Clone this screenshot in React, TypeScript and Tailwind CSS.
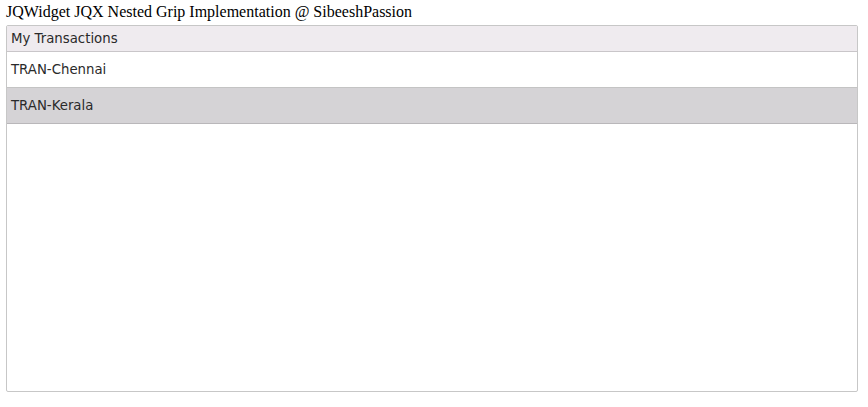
export default function App() {
  const rows = [
    { name: "TRAN-Chennai", selected: false },
    { name: "TRAN-Kerala", selected: true },
  ];

  return (
    <div className="w-[868px] h-[407px] bg-white px-[6px] pt-[2px] text-black">
      <p className="font-['Liberation_Serif',serif] text-[16px] leading-[20px] h-[23px]">
        JQWidget JQX Nested Grip Implementation @ SibeeshPassion
      </p>
      <div className="w-[852px] h-[367px] border border-[#c7c7c7] rounded-[2px] overflow-hidden font-['DejaVu_Sans',Verdana,sans-serif] text-[13.3px] text-[#2a2a2a]">
        <div className="h-[26px] bg-[#efebef] border-b border-[#c9c6c9] flex items-center px-[4px]">
          My Transactions
        </div>
        {rows.map((row) => (
          <div
            key={row.name}
            className={[
              "h-[36px] border-b flex items-center px-[4px] pt-[1px]",
              row.selected
                ? "bg-[#d5d3d6] border-[#b9b7ba]"
                : "bg-white border-[#c4c4c4]",
            ].join(" ")}
          >
            {row.name}
          </div>
        ))}
      </div>
    </div>
  );
}
